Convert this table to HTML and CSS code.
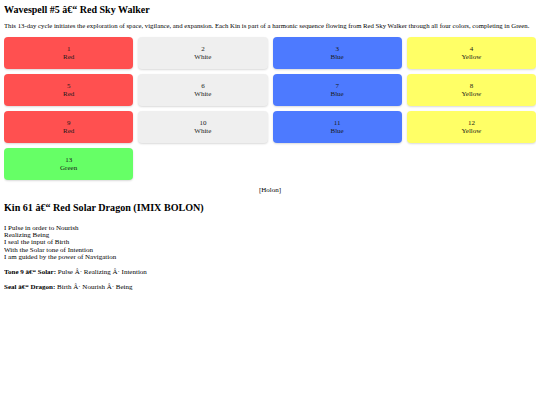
FILE: index.html
```html
<!DOCTYPE html>
<html>
<head>
<meta charset="utf-8">
<title>Wavespell</title>
<link rel="stylesheet" href="styles.css">
</head>
<body>
<h1 class="title">Wavespell #5 â€&ldquo; Red Sky Walker</h1>
<p class="intro">This 13-day cycle initiates the exploration of space, vigilance, and expansion. Each Kin is part of a harmonic sequence flowing from Red Sky Walker through all four colors, completing in Green.</p>
<div class="grid">
  <div class="card red">1<br>Red</div>
  <div class="card white">2<br>White</div>
  <div class="card blue">3<br>Blue</div>
  <div class="card yellow">4<br>Yellow</div>
  <div class="card red">5<br>Red</div>
  <div class="card white">6<br>White</div>
  <div class="card blue">7<br>Blue</div>
  <div class="card yellow">8<br>Yellow</div>
  <div class="card red">9<br>Red</div>
  <div class="card white">10<br>White</div>
  <div class="card blue">11<br>Blue</div>
  <div class="card yellow">12<br>Yellow</div>
  <div class="card green">13<br>Green</div>
</div>
<div class="holon">[Holon]</div>
<h2 class="kin">Kin 61 â€&ldquo; Red Solar Dragon (IMIX BOLON)</h2>
<div class="poem">I Pulse in order to Nourish<br>Realizing Being<br>I seal the input of Birth<br>With the Solar tone of Intention<br>I am guided by the power of Navigation</div>
<p class="meta"><b>Tone 9 â€&ldquo; Solar:</b> Pulse Â· Realizing Â· Intention</p>
<p class="meta"><b>Seal â€&ldquo; Dragon:</b> Birth Â· Nourish Â· Being</p>
</body>
</html>
```
FILE: styles.css
```css
body {
  margin: 4px;
  font-family: "Liberation Serif", "Times New Roman", serif;
  font-size: 7px;
  color: #000;
  background: #fff;
}
.title {
  font-size: 10px;
  margin: 0 0 6.5px;
}
.intro {
  font-size: 6.74px;
  margin: 0 0 8px;
}
.grid {
  display: grid;
  grid-template-columns: repeat(4, 1fr);
  gap: 5px;
}
.card {
  font-size: 7px;
  line-height: 8px;
  text-align: center;
  padding: 8px 0;
  border-radius: 4px;
  color: #1a1a1a;
  box-shadow: 0 1px 2px rgba(0,0,0,0.15);
}
.red { background: #ff5050; }
.white { background: #efefef; }
.blue { background: #4d7aff; }
.yellow { background: #ffff66; }
.green { background: #66ff66; }
.holon {
  text-align: center;
  margin: 6.4px 0 0;
}
.kin {
  font-size: 10.1px;
  margin: 8.6px 0 11.3px;
}
.poem {
  line-height: 7.35px;
}
.meta {
  line-height: 7.5px;
  margin: 7.5px 0 0;
}
```
